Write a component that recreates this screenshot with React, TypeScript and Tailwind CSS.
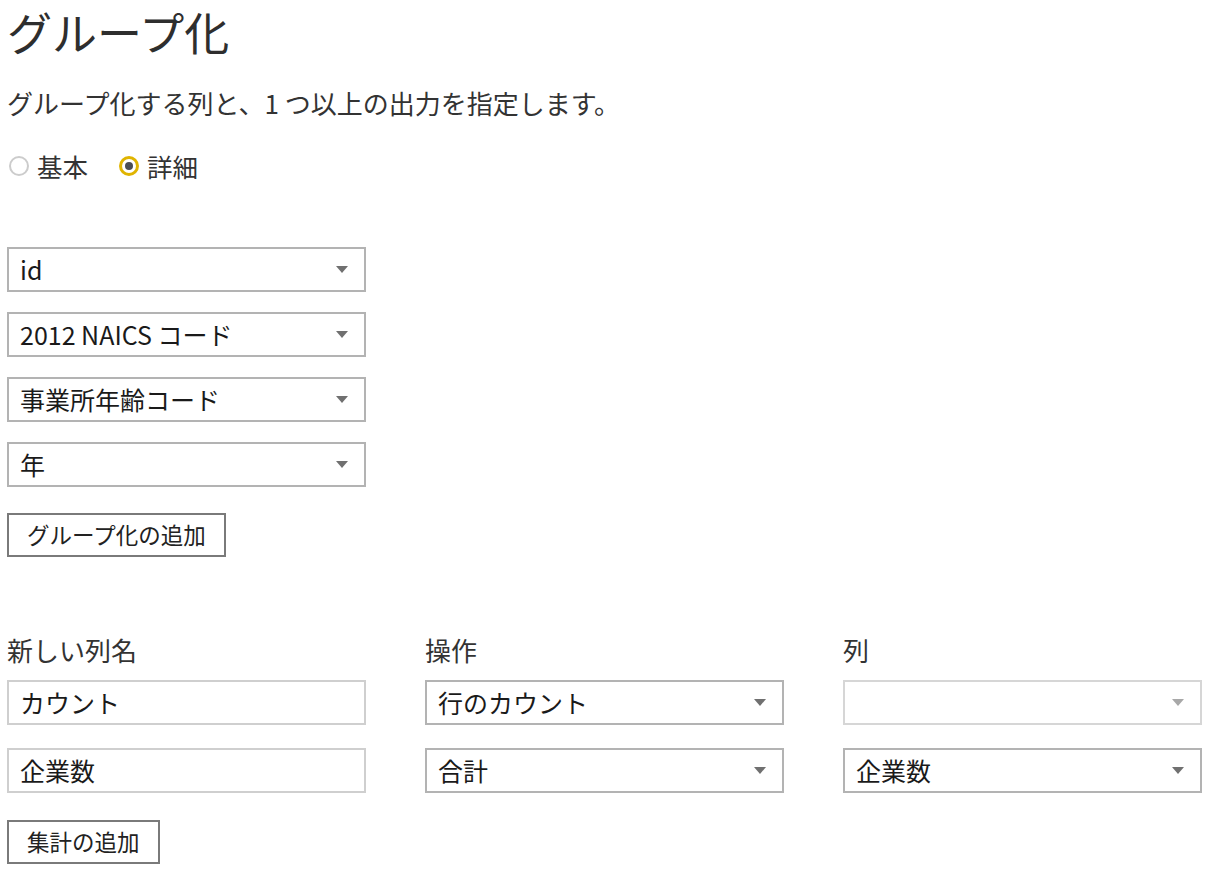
import React from 'react'

const font = { fontFamily: '"Noto Sans CJK JP", "Noto Sans", sans-serif' }

function Caret({ disabled }: { disabled?: boolean }) {
  return (
    <svg width="12" height="7" viewBox="0 0 12 7" className="shrink-0">
      <path d="M0 0 L12 0 L6 7 Z" fill={disabled ? '#a8a8a8' : '#707070'} />
    </svg>
  )
}

function Dropdown({ value, disabled }: { value?: string; disabled?: boolean }) {
  return (
    <div
      className={`flex h-[45px] w-[359px] items-center justify-between border-2 bg-white pl-[11px] pr-[16px] text-[25px] text-[#1a1a1a] ${
        disabled ? 'border-[#d6d6d6]' : 'border-[#b3b3b3]'
      }`}
    >
      <span className="leading-none">{value}</span>
      <Caret disabled={disabled} />
    </div>
  )
}

function TextBox({ value }: { value: string }) {
  return (
    <div className="flex h-[45px] w-[359px] items-center border-2 border-[#cfcfcf] bg-white pl-[11px] text-[25px] text-[#1a1a1a]">
      <span className="leading-none">{value}</span>
    </div>
  )
}

function Button({ label }: { label: string }) {
  return (
    <button className="flex h-[44px] items-center border-2 border-[#7a7a7a] bg-white px-[18px] text-[22.5px] text-[#222]">
      {label}
    </button>
  )
}

function Radio({ label, checked }: { label: string; checked?: boolean }) {
  return (
    <label className="flex items-center gap-[8px]">
      {checked ? (
        <span className="flex h-[20px] w-[20px] items-center justify-center rounded-full border-[3px] border-[#e0b400]">
          <span className="h-[8px] w-[8px] rounded-full bg-[#4a4d55]" />
        </span>
      ) : (
        <span className="h-[20px] w-[20px] rounded-full border-2 border-[#cccccc]" />
      )}
      <span className="text-[25.5px] text-[#333]">{label}</span>
    </label>
  )
}

export default function App() {
  return (
    <div style={font} className="min-h-[880px] w-[1216px] bg-white pl-[7px] pt-[2px] text-[#333]">
      <h1 className="text-[45px] leading-[60px] font-normal text-[#2e2e2e]">グループ化</h1>
      <p className="mt-[25px] text-[26px] leading-[32px] text-[#333]">グループ化する列と、1 つ以上の出力を指定します。</p>
      <div className="mt-[28px] flex items-center gap-[31px] pl-[2px]">
        <Radio label="基本" />
        <Radio label="詳細" checked />
      </div>

      <div className="mt-[62px] flex flex-col gap-[20px]">
        <Dropdown value="id" />
        <Dropdown value="2012 NAICS コード" />
        <Dropdown value="事業所年齢コード" />
        <Dropdown value="年" />
      </div>
      <div className="mt-[26px] flex">
        <Button label="グループ化の追加" />
      </div>

      <div className="mt-[77px] grid grid-cols-[359px_359px_359px] gap-x-[59px]">
        <div className="text-[26px] leading-[32px] text-[#333]">新しい列名</div>
        <div className="text-[26px] leading-[32px] text-[#333]">操作</div>
        <div className="text-[26px] leading-[32px] text-[#333]">列</div>
      </div>
      <div className="mt-[14px] grid grid-cols-[359px_359px_359px] gap-x-[59px] gap-y-[23px]">
        <TextBox value="カウント" />
        <Dropdown value="行のカウント" />
        <Dropdown disabled />
        <TextBox value="企業数" />
        <Dropdown value="合計" />
        <Dropdown value="企業数" />
      </div>
      <div className="mt-[27px] flex">
        <Button label="集計の追加" />
      </div>
    </div>
  )
}
